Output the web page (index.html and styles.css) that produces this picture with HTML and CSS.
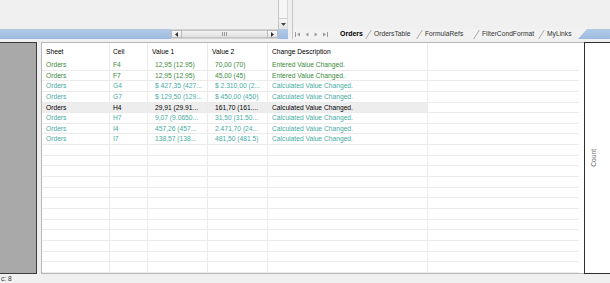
FILE: index.html
```html
<!DOCTYPE html>
<html lang="en">
<head>
  <meta charset="UTF-8" />
  <title>Change Log</title>
  <link rel="stylesheet" href="styles.css">
</head>
<body>

<!-- top strip with vertical scroller -->
<div class="top">
  <div class="top-fill"></div>
  <div class="vscroll">
    <div class="vscroll-track"></div>
    <div class="vscroll-btn">
      <svg width="5" height="3" viewBox="0 0 5 3"><path d="M0 0H5L2.5 3Z" fill="#444"/></svg>
    </div>
  </div>
  <div class="top-right"></div>
</div>

<!-- horizontal scroller + sheet tabs -->
<div class="bar">
  <div class="bar-fill"></div>
  <div class="hscroll">
    <div class="hs-btn">
      <svg width="3" height="5" viewBox="0 0 3 5"><path d="M3 0V5L0 2.5Z" fill="#333"/></svg>
    </div>
    <div class="hs-thumb"><span class="grip"></span></div>
    <div class="hs-btn">
      <svg width="3" height="5" viewBox="0 0 3 5"><path d="M0 0V5L3 2.5Z" fill="#333"/></svg>
    </div>
  </div>
  <div class="bar-corner"></div>
  <div class="tabs">
    <div class="tab-nav">
      <svg width="5" height="5" viewBox="0 0 5 5"><path d="M0.5 0V5" stroke="#9a9a9a"/><path d="M5 0.5V4.5L2 2.5Z" fill="#9a9a9a"/></svg>
      <svg width="4" height="5" viewBox="0 0 4 5"><path d="M3.5 0.5V4.5L0.5 2.5Z" fill="#9a9a9a"/></svg>
      <svg width="4" height="5" viewBox="0 0 4 5"><path d="M0.5 0.5V4.5L3.5 2.5Z" fill="#9a9a9a"/></svg>
      <svg width="5" height="5" viewBox="0 0 5 5"><path d="M0 0.5V4.5L3 2.5Z" fill="#9a9a9a"/><path d="M4.5 0V5" stroke="#9a9a9a"/></svg>
    </div>
    <div class="tab active tab-orders">Orders</div>
    <div class="tab tab-table">OrdersTable</div>
    <div class="tab tab-formula">FormulaRefs</div>
    <div class="tab tab-filter">FilterCondFormat</div>
    <div class="tab tab-links">MyLinks</div>
    <div class="tab-end"></div>
  </div>
</div>

<div class="spacer"></div>

<div class="main">
  <div class="side-left"></div>

  <div class="grid">
    <div class="row head">
      <div class="cell">Sheet</div>
      <div class="cell c-cell">Cell</div>
      <div class="cell">Value 1</div>
      <div class="cell">Value 2</div>
      <div class="cell">Change Description</div>
      <div class="cell"></div>
    </div>

    <div class="row entered">
      <div class="cell">Orders</div><div class="cell c-cell">F4</div>
      <div class="cell val">12,95 (12.95)</div><div class="cell val">70,00 (70)</div>
      <div class="cell">Entered Value Changed.</div><div class="cell"></div>
    </div>
    <div class="row entered">
      <div class="cell">Orders</div><div class="cell c-cell">F7</div>
      <div class="cell val">12,95 (12.95)</div><div class="cell val">45,00 (45)</div>
      <div class="cell">Entered Value Changed.</div><div class="cell"></div>
    </div>
    <div class="row calc">
      <div class="cell">Orders</div><div class="cell c-cell">G4</div>
      <div class="cell val">$ 427,35 (427...</div><div class="cell val">$ 2.310,00 (2...</div>
      <div class="cell">Calculated Value Changed.</div><div class="cell"></div>
    </div>
    <div class="row calc">
      <div class="cell">Orders</div><div class="cell c-cell">G7</div>
      <div class="cell val">$ 129,50 (129...</div><div class="cell val">$ 450,00 (450)</div>
      <div class="cell">Calculated Value Changed.</div><div class="cell"></div>
    </div>
    <div class="row selected">
      <div class="cell">Orders</div><div class="cell c-cell">H4</div>
      <div class="cell val">29,91 (29.91...</div><div class="cell val">161,70 (161....</div>
      <div class="cell">Calculated Value Changed.</div><div class="cell"></div>
    </div>
    <div class="row calc">
      <div class="cell">Orders</div><div class="cell c-cell">H7</div>
      <div class="cell val">9,07 (9.0650...</div><div class="cell val">31,50 (31.50...</div>
      <div class="cell">Calculated Value Changed.</div><div class="cell"></div>
    </div>
    <div class="row calc">
      <div class="cell">Orders</div><div class="cell c-cell">I4</div>
      <div class="cell val">457,26 (457...</div><div class="cell val">2.471,70 (24...</div>
      <div class="cell">Calculated Value Changed.</div><div class="cell"></div>
    </div>
    <div class="row calc">
      <div class="cell">Orders</div><div class="cell c-cell">I7</div>
      <div class="cell val">138,57 (138...</div><div class="cell val">481,50 (481.5)</div>
      <div class="cell">Calculated Value Changed.</div><div class="cell"></div>
    </div>

    <div id="emptyRows"></div>
  </div>

  <div class="side-right"><span class="count">Count</span></div>
</div>

<div class="status">c: 8</div>

<script>
  // remplir la grille avec des lignes vides
  const emptyRows = document.getElementById("emptyRows");
  for (let i = 0; i < 12; i++) {
    const row = document.createElement("div");
    row.className = "row";
    row.innerHTML = '<div class="cell"></div>'.repeat(6);
    emptyRows.appendChild(row);
  }
</script>

</body>
</html>
```

FILE: styles.css
```css
body {
  margin: 0;
  width: 610px;
  height: 283px;
  overflow: hidden;
  background-color: #f0f0f0;
  font-family: "Liberation Sans", Arial, sans-serif;
  font-size: 6.7px;
  color: #000;
}

/* top strip */
.top {
  height: 29px;
  display: flex;
}
.top-fill {
  width: 278px;
}
.vscroll {
  width: 10px;
  box-sizing: border-box;
  display: flex;
  flex-direction: column;
  background-color: #f6f6f6;
  border-left: 1px solid #c3c3c3;
  border-right: 1px solid #d8d8d8;
}
.vscroll-track {
  flex: 1;
}
.vscroll-btn {
  height: 10px;
  display: flex;
  align-items: center;
  justify-content: center;
  background: linear-gradient(#f7f7f7, #e4e4e4);
  border-top: 1px solid #cdcdcd;
}
.top-right {
  flex: 1;
  margin-left: 4px;
  border-left: 1px solid #c4c4c4;
}

/* scroller + tabs */
.bar {
  height: 10px;
  display: flex;
}
.bar-fill {
  width: 171px;
  background: linear-gradient(#b2cae7, #9dbbe0);
}
.hscroll {
  width: 107px;
  box-sizing: border-box;
  display: flex;
  background-color: #ececec;
  border-top: 1px solid #d2d2d2;
  border-bottom: 1px solid #d2d2d2;
}
.hs-btn {
  width: 11px;
  box-sizing: border-box;
  display: flex;
  align-items: center;
  justify-content: center;
  background: linear-gradient(#fafafa, #e6e6e6);
  border: 1px solid #b9b9b9;
}
.hs-thumb {
  flex: 1;
  display: flex;
  align-items: center;
  justify-content: center;
  background: linear-gradient(#f2f2f2, #e1e1e1);
  border-top: 1px solid #c5c5c5;
  border-bottom: 1px solid #c5c5c5;
}
.grip {
  width: 5px;
  height: 4px;
  background: repeating-linear-gradient(90deg, #9a9a9a 0 1px, transparent 1px 2px);
}
.bar-corner {
  width: 10px;
  background: linear-gradient(#b2cae7, #9dbbe0);
}
.tabs {
  flex: 1;
  margin-left: 4px;
  display: flex;
  align-items: center;
  border-left: 1px solid #c4c4c4;
  background-color: #f2f2f2;
}
.tab-nav {
  width: 47px;
  box-sizing: border-box;
  padding-left: 2px;
  display: flex;
  align-items: center;
  gap: 5px;
}
.tab {
  position: relative;
  height: 10px;
  line-height: 10px;
  box-sizing: border-box;
  color: #333;
  white-space: nowrap;
}
.tab::before {
  content: "";
  position: absolute;
  left: -6px;
  top: 1px;
  bottom: 0;
  width: 1px;
  background-color: #a8a8a8;
  transform: skewX(-32deg);
}
.tab.active {
  font-weight: bold;
  font-size: 7px;
  color: #000;
}
.tab.active::before {
  display: none;
}
.tab-orders { width: 34px; }
.tab-table { width: 51px; }
.tab-formula { width: 57px; }
.tab-filter { width: 65px; }
.tab-links { width: 31px; }
.tab-end {
  flex: 1;
  height: 10px;
  background: linear-gradient(#b2cae7, #9dbbe0);
  clip-path: polygon(9px 0, 100% 0, 100% 100%, 0 100%);
}

.spacer {
  height: 3px;
}

/* main area */
.main {
  height: 232px;
  display: flex;
}
.side-left {
  width: 37px;
  box-sizing: border-box;
  background-color: #a9a9a9;
  border: 1px solid #3c3c3c;
  border-left: none;
}
.grid {
  width: 543px;
  margin-left: 4px;
  box-sizing: border-box;
  background-color: #fff;
  border: 1px solid #b8b8b8;
  border-right: none;
  overflow: hidden;
}
.row {
  display: grid;
  grid-template-columns: 68px 38px 60px 60px 160px 151px;
  height: 10.65px;
  line-height: 10.65px;
}
.row.head {
  height: 17px;
  line-height: 17px;
}
.cell {
  box-sizing: border-box;
  padding-left: 4px;
  border-right: 1px solid #ebebeb;
  border-bottom: 1px solid #ebebeb;
  white-space: nowrap;
  overflow: hidden;
}
.row .cell:last-child {
  border-right: none;
}
.row.head .cell {
  border-bottom: none;
}
.cell.c-cell {
  padding-left: 3px;
}
.cell.val {
  padding-left: 7px;
}
.entered {
  color: #3a8a3a;
}
.calc {
  color: #47ab9f;
}
.selected .cell:nth-child(-n+5) {
  background-color: #ededed;
}

.side-right {
  flex: 1;
  margin-left: 0;
  box-sizing: border-box;
  display: flex;
  align-items: center;
  justify-content: center;
  padding-right: 9px;
  background-color: #fff;
  border: 1px solid #2e2e2e;
  border-right: none;
}
.count {
  writing-mode: vertical-rl;
  transform: rotate(180deg);
  color: #6a6a6a;
}

.status {
  height: 9px;
  line-height: 9px;
  padding-left: 1px;
  color: #333;
}
```
